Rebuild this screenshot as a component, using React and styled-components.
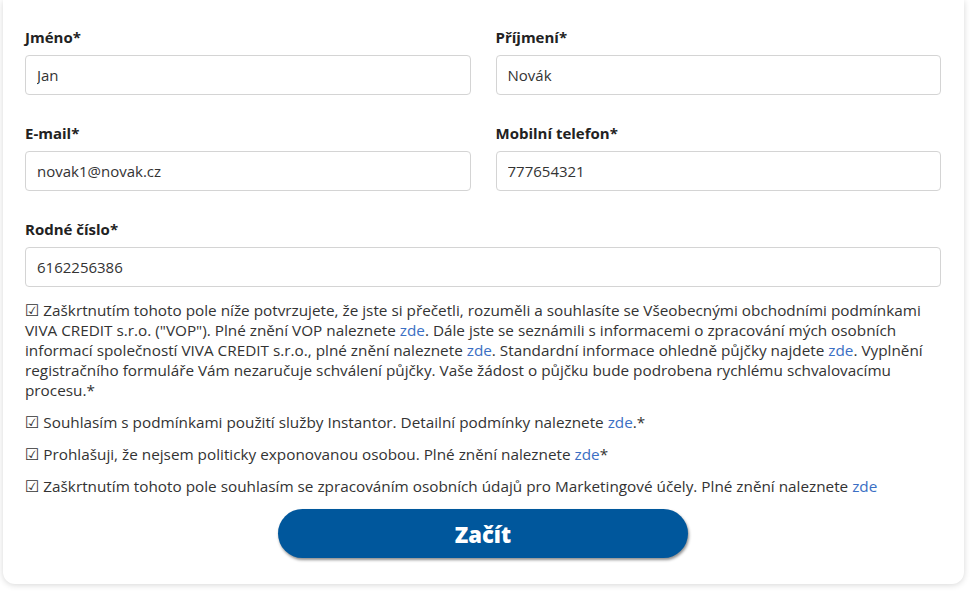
import React from "react";
import styled, { createGlobalStyle } from "styled-components";

const Global = createGlobalStyle`
  html, body {
    margin: 0;
    padding: 0;
    background: #ffffff;
    font-family: "Open Sans", "Noto Sans", "DejaVu Sans", sans-serif;
    color: #333;
  }
  * { box-sizing: border-box; }
`;

const fields = [
  { label: "Jméno*", value: "Jan" },
  { label: "Příjmení*", value: "Novák" },
  { label: "E-mail*", value: "novak1@novak.cz" },
  { label: "Mobilní telefon*", value: "777654321" },
  { label: "Rodné číslo*", value: "6162256386", wide: true },
];

const App = () => {
  return (
    <Page>
      <Global />
      <Card>
        <Grid>
          {fields.map((f) => (
            <Field key={f.label} $wide={f.wide}>
              <Label>{f.label}</Label>
              <Input defaultValue={f.value} />
            </Field>
          ))}
        </Grid>

        <Consents>
          <Consent>
            <Box>☑</Box> Zaškrtnutím tohoto pole níže potvrzujete, že jste si
            přečetli, rozuměli a souhlasíte se Všeobecnými obchodními podmínkami
            VIVA CREDIT s.r.o. ("VOP"). Plné znění VOP naleznete{" "}
            <Link href="#">zde</Link>. Dále jste se seznámili s informacemi o
            zpracování mých osobních informací společností VIVA CREDIT s.r.o.,
            plné znění naleznete <Link href="#">zde</Link>. Standardní informace
            ohledně půjčky najdete <Link href="#">zde</Link>. Vyplnění
            registračního formuláře Vám nezaručuje schválení půjčky. Vaše žádost
            o půjčku bude podrobena rychlému schvalovacímu procesu.*
          </Consent>
          <Consent>
            <Box>☑</Box> Souhlasím s podmínkami použití služby Instantor.
            Detailní podmínky naleznete <Link href="#">zde</Link>.*
          </Consent>
          <Consent>
            <Box>☑</Box> Prohlašuji, že nejsem politicky exponovanou osobou.
            Plné znění naleznete <Link href="#">zde</Link>*
          </Consent>
          <Consent>
            <Box>☑</Box> Zaškrtnutím tohoto pole souhlasím se zpracováním
            osobních údajů pro Marketingové účely. Plné znění naleznete{" "}
            <Link href="#">zde</Link>
          </Consent>
        </Consents>

        <Actions>
          <Submit>Začít</Submit>
        </Actions>
      </Card>
    </Page>
  );
};

export default App;

const Page = styled.div`
  padding: 0 16px 11px 3px;
`;

const Card = styled.div`
  background: #fff;
  border-radius: 0 0 12px 12px;
  box-shadow: 0 1px 6px rgba(0, 0, 0, 0.16);
  padding: 27px 23px 26px 22px;
`;

const Grid = styled.div`
  display: grid;
  grid-template-columns: 1fr 1fr;
  column-gap: 25px;
  row-gap: 28px;
`;

const Field = styled.div`
  display: flex;
  flex-direction: column;
  grid-column: ${(p) => (p.$wide ? "1 / -1" : "auto")};
`;

const Label = styled.label`
  font-size: 15px;
  font-weight: 700;
  line-height: 20px;
  color: #222;
  margin-bottom: 8px;
`;

const Input = styled.input`
  height: 40px;
  border: 1px solid #d4d4d4;
  border-radius: 4px;
  padding: 0 11px;
  font-family: inherit;
  font-size: 15px;
  color: #333;
  outline: none;
  background: #fff;
`;

const Consents = styled.div`
  margin-top: 13px;
  display: flex;
  flex-direction: column;
  gap: 12px;
`;

const Consent = styled.p`
  margin: 0;
  font-size: 15.3px;
  line-height: 20px;
  color: #333;
`;

const Box = styled.span`
  font-family: "DejaVu Sans", sans-serif;
  font-size: 16px;
  line-height: 1;
  color: #333;
`;

const Link = styled.a`
  color: #3b6fc4;
  text-decoration: none;
`;

const Actions = styled.div`
  display: flex;
  justify-content: center;
  margin-top: 13px;
`;

const Submit = styled.button`
  width: 410px;
  height: 49px;
  border: none;
  border-radius: 25px;
  background: #00579c;
  color: #fff;
  font-family: "Open Sans", sans-serif;
  font-size: 22px;
  font-weight: 800;
  box-shadow: 1px 2px 3px rgba(0, 0, 0, 0.45);
  cursor: pointer;
`;
